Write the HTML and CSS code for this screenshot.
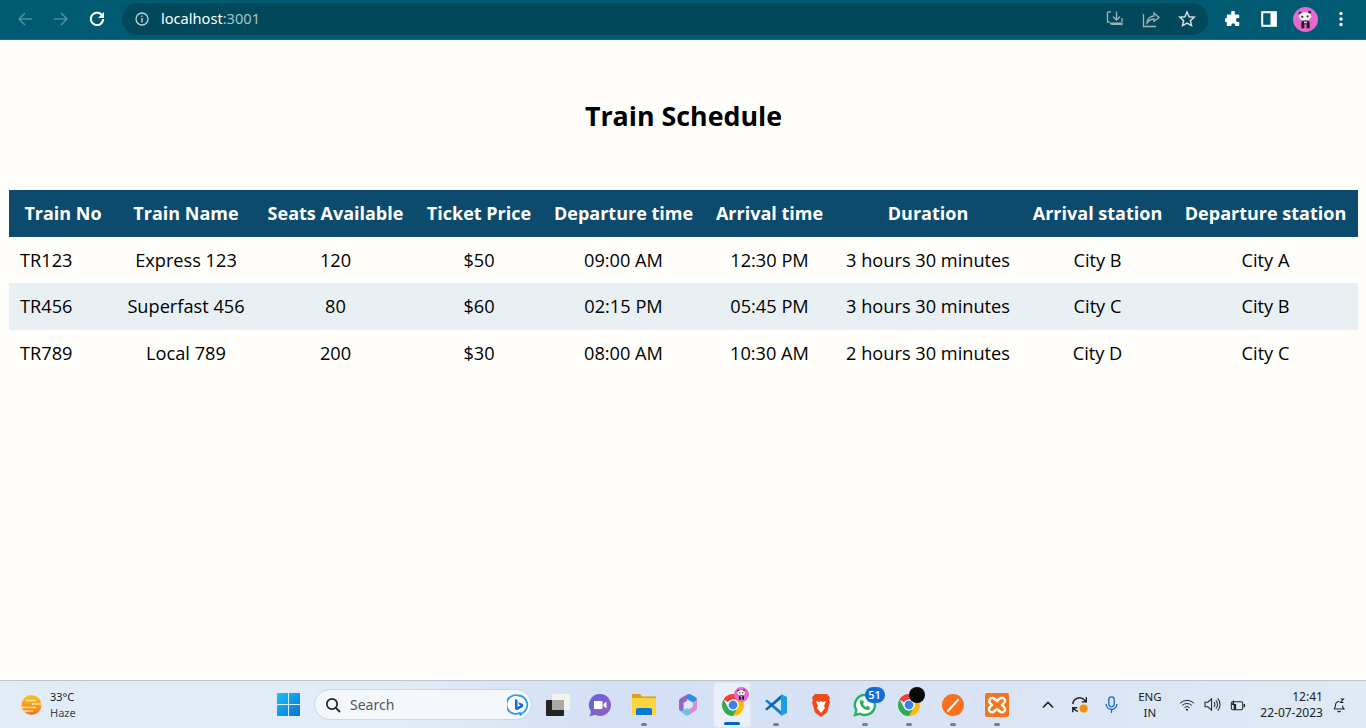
FILE: index.html
```html
<!DOCTYPE html>
<html lang="en">
<head>
<meta charset="utf-8">
<title>Train Schedule</title>
<link rel="stylesheet" href="styles.css">
</head>
<body>
<svg class="defs" width="0" height="0" aria-hidden="true">
  <symbol id="chrome" viewBox="0 0 24 24">
    <path fill="#ea4335" d="M12 1A11 11 0 0 1 21.530 6.500H12A5.500 5.500 0 0 0 7.240 9.250L2.470 6.500A11 11 0 0 1 12 1z"/>
    <path fill="#fbbc04" d="M21.530 6.500A11 11 0 0 1 12 23L16.760 14.750A5.500 5.500 0 0 0 16.760 9.250L12 6.500z"/>
    <path fill="#34a853" d="M12 23A11 11 0 0 1 2.470 6.500L7.240 14.750A5.500 5.500 0 0 0 16.760 14.750z"/>
    <circle cx="12" cy="12" r="5.600" fill="#fff"/>
    <circle cx="12" cy="12" r="4.400" fill="#3b82e8"/>
  </symbol>
  <symbol id="panda" viewBox="0 0 24 24">
    <circle cx="12" cy="12" r="12" fill="#e868cf"/>
    <circle cx="7" cy="6" r="1.700" fill="#333"/>
    <circle cx="16" cy="5" r="1.500" fill="#333"/>
    <ellipse cx="11.500" cy="9" rx="6" ry="4" fill="#f2f2f2"/>
    <circle cx="9" cy="9.500" r="1" fill="#333"/>
    <circle cx="14" cy="9" r="1" fill="#333"/>
    <path fill="#1c1c1c" d="M8 20.500V15.500q0-2.500 4-2.500t4 2.500v5h-2.900v-4h-2.200v4z"/>
    <rect x="10.500" y="14" width="3" height="1.600" fill="#ddd"/>
  </symbol>
</svg>

<div class="screen">
  <header class="browser">
    <div class="nav">
      <svg class="tb-icon" viewBox="0 0 16 16"><path class="st dim" d="M15 8H2M8 2L2 8l6 6"/></svg>
      <svg class="tb-icon" viewBox="0 0 16 16"><path class="st dim" d="M1 8h13M8 2l6 6-6 6"/></svg>
      <svg class="tb-icon" viewBox="0 0 16 16"><path class="st white" d="M13.600 5.200A6.200 6.200 0 1 0 14.200 8"/><path fill="#fff" d="M15 1v6H9z"/></svg>
    </div>
    <div class="omnibox">
      <svg class="info" viewBox="0 0 14 14"><circle cx="7" cy="7" r="6" fill="none" stroke="#c4d2d6" stroke-width="1.300"/><path fill="#c4d2d6" d="M6.300 6h1.400v4.400H6.300zM6.300 3.500h1.400v1.400H6.300z"/></svg>
      <span class="url">localhost<span class="url-port">:3001</span></span>
      <div class="omni-actions">
        <svg class="omni-icon" viewBox="0 0 18 18"><path class="st gray" d="M5 1.800H2.500a1 1 0 0 0-1 1V12h2"/><path class="st gray" d="M10.500 1.500v8M7 6.500l3.500 3.500L14 6.500"/><path class="st gray" d="M16 8v4"/><path fill="#9fb2b8" d="M3.500 12.500h12.500a1 1 0 0 1-1 2.500h-9q-2 0-2.500-2.500z"/></svg>
        <svg class="omni-icon" viewBox="0 0 18 18"><path class="st gray" d="M1.500 4v12.500H14"/><path class="st gray" d="M5 13q.5-6.500 7-7V3l5 4.500-5 4V9q-4 0-7 4z"/></svg>
        <svg class="omni-icon" viewBox="0 0 18 18"><path class="st lgray" d="M9 2l2.100 4.700 5.100.5-3.800 3.400 1.100 5L9 13l-4.500 2.600 1.100-5L1.800 7.200l5.100-.5z"/></svg>
      </div>
    </div>
    <div class="browser-actions">
      <svg class="tb-icon" viewBox="0 0 18 18"><path fill="#fff" d="M7 1.500a2 2 0 0 1 4 0V4h4a1 1 0 0 1 1 1v3h-1.500a2.200 2.200 0 0 0 0 4.400H16V16a1 1 0 0 1-1 1h-3.500v-1a2.200 2.200 0 0 0-4.400 0v1H3a1 1 0 0 1-1-1v-3.500h-.500a2.200 2.200 0 0 1 0-4.400H2V5a1 1 0 0 1 1-1h4z"/></svg>
      <svg class="tb-icon" viewBox="0 0 16 16"><rect x="1.200" y="1.200" width="13.600" height="13.600" fill="none" stroke="#fff" stroke-width="2"/><rect x="9.500" y="1" width="6" height="14" fill="#fff"/></svg>
      <svg class="avatar"><use href="#panda"/></svg>
      <svg class="tb-icon" viewBox="0 0 16 16"><circle cx="8" cy="2.500" r="1.700" fill="#fff"/><circle cx="8" cy="8" r="1.700" fill="#fff"/><circle cx="8" cy="13.500" r="1.700" fill="#fff"/></svg>
    </div>
  </header>

  <main class="page">
    <h1 class="title">Train Schedule</h1>
    <table class="schedule">
      <thead>
        <tr><th>Train No</th><th>Train Name</th><th>Seats Available</th><th>Ticket Price</th><th>Departure time</th><th>Arrival time</th><th>Duration</th><th>Arrival station</th><th>Departure station</th></tr>
      </thead>
      <tbody>
        <tr><td>TR123</td><td>Express 123</td><td>120</td><td>$50</td><td>09:00 AM</td><td>12:30 PM</td><td>3 hours 30 minutes</td><td>City B</td><td>City A</td></tr>
        <tr><td>TR456</td><td>Superfast 456</td><td>80</td><td>$60</td><td>02:15 PM</td><td>05:45 PM</td><td>3 hours 30 minutes</td><td>City C</td><td>City B</td></tr>
        <tr><td>TR789</td><td>Local 789</td><td>200</td><td>$30</td><td>08:00 AM</td><td>10:30 AM</td><td>2 hours 30 minutes</td><td>City D</td><td>City C</td></tr>
      </tbody>
    </table>
  </main>

  <footer class="taskbar">
    <div class="weather">
      <svg class="weather-icon" viewBox="0 0 22 22">
        <defs><linearGradient id="sun" x1="0" y1="0" x2="0" y2="1"><stop offset="0" stop-color="#fdc21c"/><stop offset="1" stop-color="#f7761a"/></linearGradient></defs>
        <circle cx="11.500" cy="11" r="10" fill="url(#sun)"/>
        <path stroke="#fbe3a8" stroke-width="1.300" fill="none" d="M0 13.500h16M1 17h12M6 6.500h10M12 10h9"/>
      </svg>
      <div class="weather-text"><span class="temp">33°C</span><span class="haze">Haze</span></div>
    </div>
    <div class="centre">
      <svg class="start" viewBox="0 0 24 24">
        <defs><linearGradient id="win" x1="0" y1="0" x2="1" y2="1"><stop offset="0" stop-color="#19c3fb"/><stop offset="1" stop-color="#0a6fd6"/></linearGradient></defs>
        <path fill="url(#win)" d="M0 1a1 1 0 0 1 1-1h10.500v11.500H0zM12.500 0H23a1 1 0 0 1 1 1v10.500H12.500zM0 12.500h11.500V24H1a1 1 0 0 1-1-1zM12.500 12.500H24V23a1 1 0 0 1-1 1H12.500z"/>
      </svg>
      <div class="search">
        <svg class="search-glass" viewBox="0 0 16 16"><circle cx="7" cy="7" r="5.200" fill="none" stroke="#222" stroke-width="1.700"/><path stroke="#222" stroke-width="1.900" d="M10.800 10.800L15 15"/></svg>
        <span class="search-text">Search</span>
        <svg class="bing" viewBox="0 0 22 22"><path fill="#fff" stroke="#2a9be8" stroke-width="1.800" d="M11 1.500a9.300 9.300 0 0 1 4 17.700L13.500 21l-.5-2.200A9.300 9.300 0 1 1 11 1.500z"/><path fill="#1668dc" d="M8 5l2.500 1v7l3-1.700-1.500-.8-.9-2.300 5 1.800v2.700l-6 3.500-2.100-1.200z"/></svg>
      </div>
      <div class="apps">
        <div class="app">
          <svg class="app-icon first-icon" viewBox="0 0 24 24"><rect x="0" y="7" width="18" height="16" rx="1" fill="#222"/><rect x="6" y="1" width="18" height="16" rx="1" fill="#f3f3ef"/><rect x="6" y="7" width="12" height="10" fill="#a9a9a6"/></svg>
        </div>
        <div class="app">
          <svg class="app-icon" viewBox="0 0 24 24">
            <defs><linearGradient id="meet" x1="0" y1="0" x2="1" y2="1"><stop offset="0" stop-color="#5a66d8"/><stop offset="1" stop-color="#9a5cc0"/></linearGradient></defs>
            <path fill="url(#meet)" d="M12 1a11 11 0 1 1-5 20.800L1.500 23.500 3 18.500A11 11 0 0 1 12 1z"/><path fill="#fff" d="M6 8h7.500a1 1 0 0 1 1 1v6a1 1 0 0 1-1 1H6z"/><path fill="#fff" d="M15.500 11l3-2.500v7l-3-2.500z"/></svg>
        </div>
        <div class="app">
          <svg class="app-icon" viewBox="0 0 24 24"><path fill="#e0a015" d="M0 2a1 1 0 0 1 1-1h7l2 2.500h14V6H0z"/><path fill="#fcd53f" d="M0 5h24v16a1 1 0 0 1-1 1H1a1 1 0 0 1-1-1z"/><path fill="#0a78d4" d="M4 22v-5a2 2 0 0 1 2-2h12a2 2 0 0 1 2 2v5z"/></svg>
          <i class="dot"></i>
        </div>
        <div class="app">
          <svg class="app-icon" viewBox="0 0 24 24"><path fill="#9a62d0" d="M3 8q0-2 2-3l6-3.500V8L7.500 10v7L5 18.500q-2-1-2-3z"/><path fill="#2d8fdf" d="M11 1.500q2-1 4 0l5 3q1 1 1 2.500l-4 2.500-6-3.500z"/><path fill="#d98bd6" d="M21 7v8q0 2-2 3l-6 4v-6l4-2.500V9.500z"/><path fill="#6cc3e6" d="M5 18.500L11 15l2 1v6q-2 1-4 0z"/><path fill="#fff" d="M8 9.500l4-2.500 4.500 2.500v5L12 17l-4-2.500z" opacity=".25"/></svg>
        </div>
        <div class="app active">
          <svg class="app-icon"><use href="#chrome"/></svg>
          <svg class="app-badge"><use href="#panda"/></svg>
          <i class="active-bar"></i>
        </div>
        <div class="app">
          <svg class="app-icon" viewBox="0 0 24 24"><path fill="#0f7fcc" d="M1 8l2-1.500 14 11.500V22z"/><path fill="#1d9ce8" d="M17 1l6 3v16l-6 3z"/><path fill="#0a68b4" d="M1 16l2 1.500L17 6V2z"/></svg>
          <i class="dot"></i>
        </div>
        <div class="app">
          <svg class="app-icon" viewBox="0 0 24 24"><path fill="#f1491c" d="M6 1h12l3 3.500-1 3 1 2-3 10L12 24l-6-4.500-3-10 1-2-1-3z"/><path fill="#fff" d="M7 8l3 1 2-1 2 1 3-1-2 5 1 2-4 5-4-5 1-2z"/></svg>
        </div>
        <div class="app">
          <svg class="app-icon" viewBox="0 0 24 24"><path fill="#fff" stroke="#25b45a" stroke-width="2.400" d="M12 2a10 10 0 1 1-5 18.700L2 22l1.300-4.800A10 10 0 0 1 12 2z"/><path fill="#25b45a" d="M8 7l2 .2 1 2.500-1 1.300q1 2 3 3l1.300-1.200 2.500 1.200v2q-1 1.300-3 1-6-1.500-7-7.500Q6.800 8 8 7z"/></svg>
          <span class="count">51</span>
          <i class="dot"></i>
        </div>
        <div class="app">
          <svg class="app-icon"><use href="#chrome"/></svg>
          <i class="black-badge"></i>
          <i class="dot"></i>
        </div>
        <div class="app">
          <svg class="app-icon" viewBox="0 0 24 24"><circle cx="12" cy="12" r="11" fill="#f9701f"/><path stroke="#fff" stroke-width="2" stroke-linecap="round" d="M7 18L17 7"/></svg>
          <i class="dot"></i>
        </div>
        <div class="app">
          <svg class="app-icon" viewBox="0 0 24 24"><rect width="24" height="24" rx="2" fill="#f5741f"/><path fill="none" stroke="#fff" stroke-width="2.400" d="M7 5a3 3 0 0 0-2 5l2 2-2 2a3 3 0 0 0 4 4.500l3-2.500 3 2.500a3 3 0 0 0 4-4.500l-2-2 2-2a3 3 0 0 0-4-4.500L12 8 9 5.500A3 3 0 0 0 7 5z"/></svg>
          <i class="dot"></i>
        </div>
      </div>
    </div>
    <div class="tray">
      <svg class="tray-chevron" viewBox="0 0 12 8"><path class="st dark" d="M1 6.500L6 1.500l5 5"/></svg>
      <svg class="tray-sync" viewBox="0 0 20 20"><path class="st dark" d="M2 9a7.500 7.500 0 0 1 13-4.500l2 2M17 1.500v5h-5"/><path class="st dark" d="M2 18v-5h5M2 13l2 2q1.500 1.500 3.500 2"/><circle cx="14" cy="14" r="4.500" fill="#f58f0c"/></svg>
      <svg class="tray-mic" viewBox="0 0 14 20"><rect x="4" y="1" width="6" height="11" rx="3" fill="none" stroke="#1766c9" stroke-width="1.400"/><path fill="none" stroke="#1766c9" stroke-width="1.400" d="M1 9a6 6 0 0 0 12 0M7 15v4"/></svg>
      <div class="lang"><span>ENG</span><span>IN</span></div>
      <svg class="tray-wifi" viewBox="0 0 18 16"><path class="st dark thin" d="M1 6a11.500 11.500 0 0 1 16 0M3.500 8.500a8 8 0 0 1 11 0M6 11a4.500 4.500 0 0 1 6 0"/><circle cx="9" cy="13.500" r="1.200" fill="#222"/></svg>
      <svg class="tray-vol" viewBox="0 0 18 16"><path class="st dark thin" d="M1 5.500h3L8 2v12L4 10.500H1zM10.500 5.500a3.500 3.500 0 0 1 0 5M12.500 3.500a6.500 6.500 0 0 1 0 9M14.500 1.500a9.500 9.500 0 0 1 0 13"/></svg>
      <svg class="tray-batt" viewBox="0 0 18 14"><rect x="2.500" y="3.500" width="12" height="8.500" rx="1.500" fill="none" stroke="#222" stroke-width="1.100"/><path fill="#222" d="M5 1L3 7h2v5h2.500V6H5.500zM15.500 6H17v3.500h-1.500z"/></svg>
      <div class="clock"><span>12:41</span><span>22-07-2023</span></div>
      <svg class="tray-bell" viewBox="0 0 16 16"><path class="st dark thin" d="M3 12q1.500-1.500 1.500-4a3.500 3.500 0 0 1 4-3.500M3 12h10q-1.500-1.500-1.500-3.500M6.500 14q1.500 1.500 3 0"/><path class="st dark thin" d="M9.500 2h3l-3 3.500h3"/></svg>
    </div>
  </footer>
</div>
</body>
</html>
```
FILE: styles.css
```css
* { box-sizing: border-box; }
html, body { margin: 0; padding: 0; height: 100%; overflow: hidden; }
body { font-family: "Open Sans", sans-serif; color: #000; background: #fffefb; }
.defs { position: absolute; }
.screen { display: flex; flex-direction: column; height: 728px; width: 1366px; }

/* stroke helpers */
.st { fill: none; stroke-width: 1.600; }
.dim { stroke: #4d8f9f; }
.white { stroke: #fff; stroke-width: 2; }
.gray { stroke: #9fb2b8; stroke-width: 1.300; }
.lgray { stroke: #d4dee1; stroke-width: 1.500; }
.dark { stroke: #222; }
.thin { stroke-width: 1.100; }

/* browser bar */
.browser { flex: 0 0 40px; display: flex; align-items: flex-start; background: #005a72; border-bottom: 1px solid #0c6d86; padding-top: 3px; }
.nav { display: flex; width: 122px; padding-left: 17px; gap: 20px; padding-top: 8px; }
.tb-icon { width: 16px; height: 16px; flex: none; }
.omnibox { width: 1086px; height: 32px; border-radius: 16px; background: #00485a; display: flex; align-items: center; padding-left: 13px; }
.info { width: 14px; height: 14px; flex: none; }
.url { margin-left: 12px; margin-top: -2px; font-family: "Noto Sans", sans-serif; font-size: 14.600px; color: #fff; line-height: 20px; }
.url-port { color: #a5c2ca; }
.omni-actions { margin-left: auto; display: flex; gap: 18px; padding-right: 12px; }
.omni-icon { width: 18px; height: 18px; flex: none; }
.browser-actions { display: flex; align-items: center; height: 32px; padding-left: 17px; gap: 20px; }
.avatar { width: 25px; height: 25px; margin: 0 -4.500px; flex: none; }

/* page */
.page { flex: 1; min-height: 0; padding: 0 8px 0 9px; }
.title { margin: 57px 0 55px; font-size: 26.800px; line-height: 38px; font-weight: 700; text-align: center; }
.schedule { width: 1349px; table-layout: fixed; border-collapse: collapse; font-size: 18px; }
.schedule th { background: #0d4b6e; color: #fff; font-weight: 700; padding: 11px 0; line-height: 25px; text-align: center; white-space: nowrap; }
.schedule td { padding: 11px 0; height: 46.500px; line-height: 24px; font-size: 18.200px; text-align: center; white-space: nowrap; }
.schedule td:first-child { text-align: left; padding-left: 11px; }
.schedule th:nth-child(1) { width: 108px; }
.schedule th:nth-child(2) { width: 138px; }
.schedule th:nth-child(3) { width: 161px; }
.schedule th:nth-child(4) { width: 126px; }
.schedule th:nth-child(5) { width: 163px; }
.schedule th:nth-child(6) { width: 129px; }
.schedule th:nth-child(7) { width: 188px; }
.schedule th:nth-child(8) { width: 151px; }
.schedule th:nth-child(9) { width: 185px; }
.schedule tbody tr:nth-child(1) td { height: 46px; }
.schedule tbody tr:nth-child(even) td { height: 47px; padding-top: 11px; padding-bottom: 12px; }
.schedule tbody tr:nth-child(even) { background: #e9f0f4; }

/* taskbar */
.taskbar { flex: 0 0 48px; display: flex; align-items: center; border-top: 1px solid #bcc3cb; background: linear-gradient(90deg, #e0edf8 0%, #e2edf8 28%, #d3e0f5 45%, #d9e3f5 70%, #dfeaf6 100%); color: #222; }
.weather { display: flex; align-items: center; width: 277px; padding-left: 20px; flex: none; }
.weather-icon { width: 22px; height: 22px; flex: none; }
.weather-text { display: flex; flex-direction: column; margin-left: 8px; font-size: 11px; line-height: 16px; font-family: "Noto Sans", sans-serif; }
.haze { color: #444; }
.centre { display: flex; align-items: center; flex: none; }
.start { width: 23px; height: 23px; flex: none; }
.search { width: 218px; height: 31px; margin-left: 14px; border-radius: 16px; background: #f4f7fc; border: 1px solid #cbd5e6; display: flex; align-items: center; padding-left: 10px; }
.search-glass { width: 16px; height: 16px; flex: none; }
.search-text { margin-left: 9px; font-size: 14px; color: #555; font-family: "Noto Sans", sans-serif; }
.bing { width: 22px; height: 22px; margin-left: auto; margin-right: 2px; flex: none; }
.apps { display: flex; margin-left: 2px; }
.app { width: 44.100px; height: 46px; display: flex; align-items: center; justify-content: center; position: relative; flex: none; }
.app-icon { width: 24px; height: 24px; flex: none; }
.first-icon { margin-left: 3px; }
.active { background: #eaf0fa; border-radius: 4px; border: 1px solid #dde4f0; width: 38px; margin: 0 3px; padding-left: 1px; }
.dot { position: absolute; bottom: 2px; left: 50%; margin-left: -3px; width: 6px; height: 3px; border-radius: 2px; background: #7a8088; }
.active-bar { position: absolute; bottom: 2px; left: 50%; margin-left: -8px; width: 16px; height: 3px; border-radius: 2px; background: #0067c0; }
.app-badge { position: absolute; top: 4px; left: 20px; width: 15px; height: 15px; }
.count { position: absolute; top: 5px; left: 22px; width: 20px; height: 16px; border-radius: 8px; background: #0f6fd6; color: #fff; font-size: 11px; line-height: 16px; text-align: center; font-weight: 600; }
.black-badge { position: absolute; top: 5px; left: 22px; width: 16px; height: 16px; border-radius: 50%; background: #0a0a0a; }
.tray { display: flex; align-items: center; flex: none; margin-left: 23px; }
.tray-chevron { width: 12px; height: 8px; flex: none; }
.tray-sync { width: 18px; height: 18px; margin-left: 17px; flex: none; }
.tray-mic { width: 13px; height: 18px; margin-left: 16px; flex: none; }
.lang { display: flex; flex-direction: column; align-items: center; margin-left: 19px; width: 26px; font-size: 11.500px; line-height: 16px; font-family: "Noto Sans", sans-serif; }
.tray-wifi { width: 16px; height: 14px; margin-left: 16px; flex: none; }
.tray-vol { width: 17px; height: 15px; margin-left: 9px; flex: none; }
.tray-batt { width: 17px; height: 14px; margin-left: 8px; flex: none; }
.clock { display: flex; flex-direction: column; align-items: flex-end; width: 64px; margin-left: 13px; font-size: 12px; line-height: 16px; font-family: "Noto Sans", sans-serif; }
.tray-bell { width: 16px; height: 16px; margin-left: 8px; flex: none; }
```
